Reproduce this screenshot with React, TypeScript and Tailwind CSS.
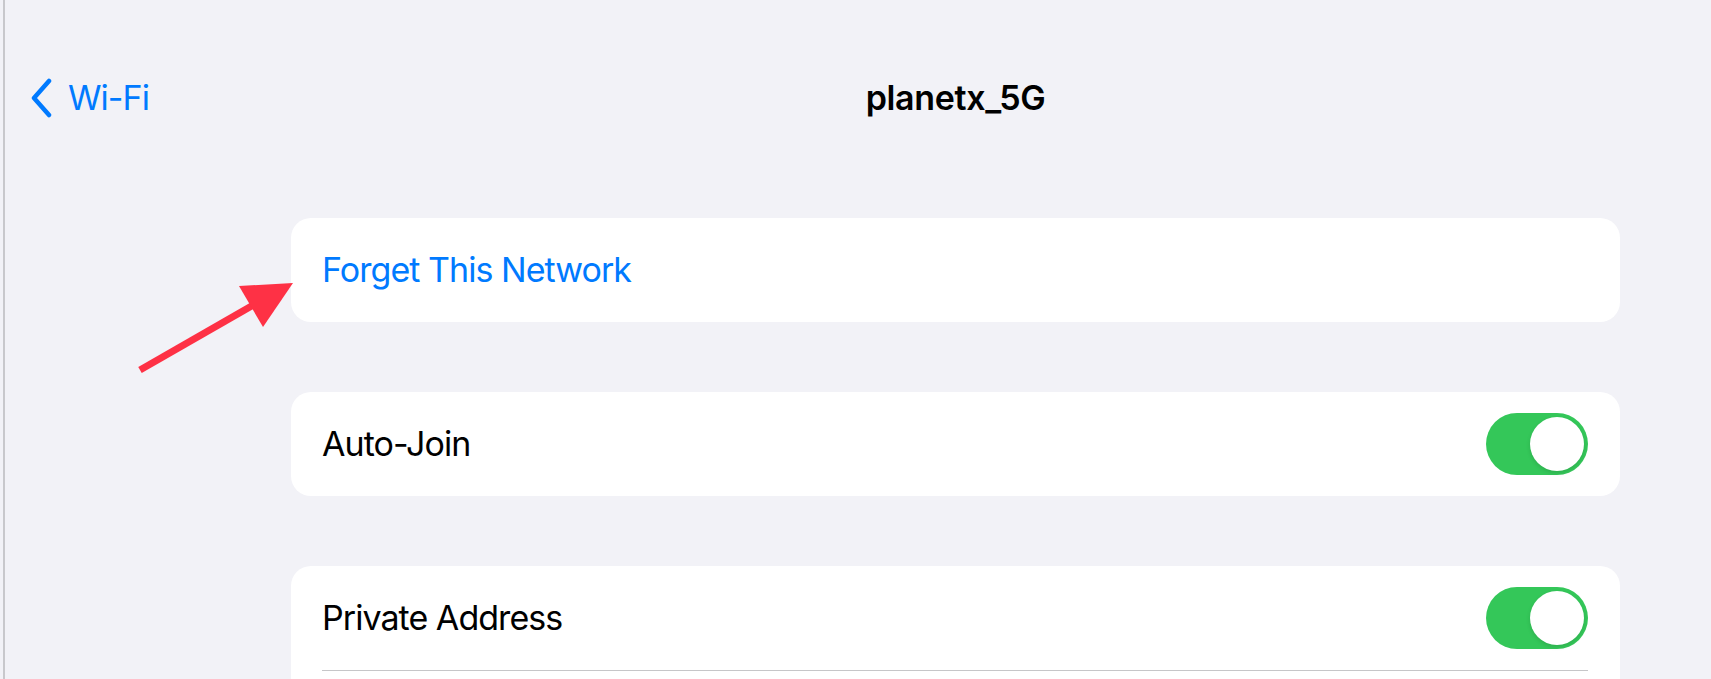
import React from "react";

const Toggle = () => (
  <div className="flex h-[62px] w-[102px] items-center justify-end rounded-full bg-[#34c759] p-[4px]">
    <div className="h-[54px] w-[54px] rounded-full bg-white shadow-[0_2px_4px_rgba(0,0,0,0.12)]" />
  </div>
);

const Row = ({ label, toggle, blue }: { label: string; toggle?: boolean; blue?: boolean }) => (
  <div className="flex h-[104px] items-center justify-between pl-[31px] pr-[32px]">
    <span className={blue ? "text-[#007aff]" : "text-black"}>{label}</span>
    {toggle && <Toggle />}
  </div>
);

const App = () => {
  return (
    <div className="relative h-[679px] overflow-hidden bg-[#f2f2f7] font-['Inter','Liberation_Sans',sans-serif] text-[34px] leading-none tracking-[-0.028em]">
      <div className="ml-[3px] h-full border-l-2 border-[#c8c8cc]">
        {/* nav bar */}
        <div className="grid h-[196px] grid-cols-[286px_1fr_91px] items-center">
          <div className="flex items-center gap-[16px] pl-[25px] text-[#007aff]">
            <svg width="22" height="40" viewBox="0 0 22 40" fill="none">
              <path d="M19 3 L4 20 L19 37" stroke="#007aff" strokeWidth="4.5" strokeLinecap="round" strokeLinejoin="round" />
            </svg>
            <span>Wi-Fi</span>
          </div>
          <div className="text-center font-semibold tracking-[-0.01em] text-black">planetx_5G</div>
          <div />
        </div>

        {/* settings groups */}
        <div className="mt-[22px] flex flex-col gap-[70px] pl-[286px] pr-[91px]">
          <div className="rounded-[20px] bg-white">
            <Row label="Forget This Network" blue />
          </div>
          <div className="rounded-[20px] bg-white">
            <Row label="Auto-Join" toggle />
          </div>
          <div className="rounded-[20px] bg-white">
            <Row label="Private Address" toggle />
            <div className="ml-[31px] mr-[32px] h-px bg-[#c6c6c8]" />
            <div className="h-[104px]" />
          </div>
        </div>
      </div>

      {/* annotation arrow */}
      <svg className="pointer-events-none absolute left-0 top-0" width="1711" height="679">
        <line x1="140" y1="370" x2="255" y2="304" stroke="#fe3145" strokeWidth="7" />
        <polygon points="293,283 239,286 263,327" fill="#fe3145" />
      </svg>
    </div>
  );
};

export default App;
